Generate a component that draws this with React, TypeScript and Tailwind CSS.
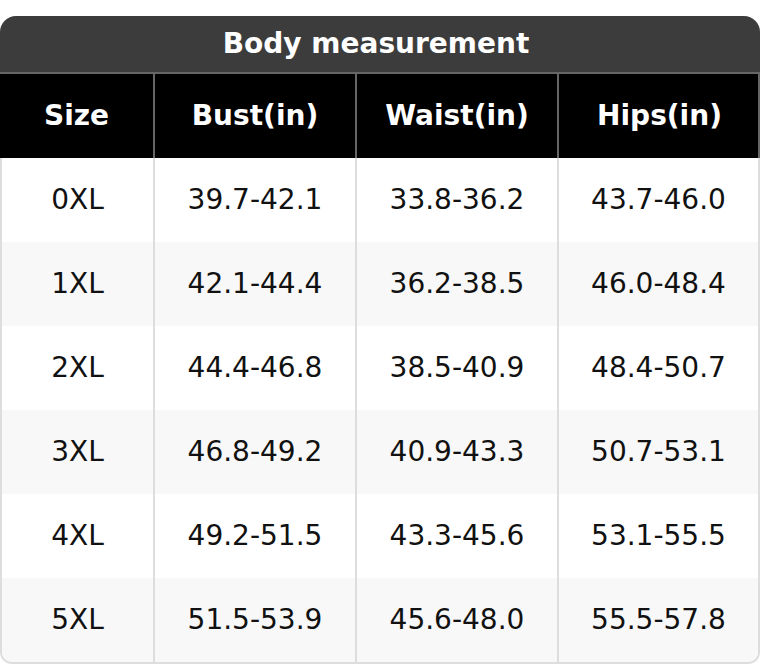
const headers = ['Size', 'Bust(in)', 'Waist(in)', 'Hips(in)']

const rows = [
  ['0XL', '39.7-42.1', '33.8-36.2', '43.7-46.0'],
  ['1XL', '42.1-44.4', '36.2-38.5', '46.0-48.4'],
  ['2XL', '44.4-46.8', '38.5-40.9', '48.4-50.7'],
  ['3XL', '46.8-49.2', '40.9-43.3', '50.7-53.1'],
  ['4XL', '49.2-51.5', '43.3-45.6', '53.1-55.5'],
  ['5XL', '51.5-53.9', '45.6-48.0', '55.5-57.8'],
]

export default function App() {
  return (
    <div className="w-[760px] h-[664px] bg-white pt-4 font-['DejaVu_Sans',sans-serif] text-[28px]">
      <div className="h-[58px] bg-[#3c3c3c] rounded-t-[16px] border-b-2 border-[#666] flex items-center justify-center pr-2">
        <h1 className="font-bold text-white leading-none">Body measurement</h1>
      </div>
      <div className="grid grid-cols-[153px_202px_202px_203px] h-[84px] bg-black border-r-2 border-[#666]">
        {headers.map((h, i) => (
          <div
            key={h}
            className={`flex items-center justify-center font-bold text-white ${i > 0 ? 'border-l-2 border-[#666]' : ''}`}
          >
            {h}
          </div>
        ))}
      </div>
      <div className="border-x-2 border-b-2 border-[#ddd] rounded-b-[12px] overflow-hidden">
        {rows.map((r, ri) => (
          <div
            key={r[0]}
            className={`grid grid-cols-[151px_202px_202px_201px] h-[84px] ${ri % 2 ? 'bg-[#f8f8f8]' : 'bg-white'}`}
          >
            {r.map((c, ci) => (
              <div
                key={ci}
                className={`flex items-center justify-center text-[#111] ${ci > 0 ? 'border-l-2 border-[#ddd]' : ''}`}
              >
                {c}
              </div>
            ))}
          </div>
        ))}
      </div>
    </div>
  )
}
